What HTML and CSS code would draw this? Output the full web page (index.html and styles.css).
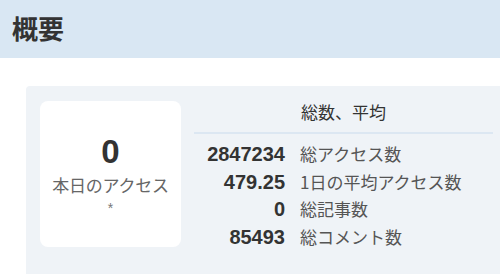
FILE: index.html
```html
<!DOCTYPE html>
<html lang="ja">
<head>
  <meta charset="UTF-8" />
  <meta name="viewport" content="width=device-width, initial-scale=1.0"/>
  <title>概要</title>
  <link rel="stylesheet" href="styles.css">
</head>
<body>
  <header class="page-head">
    <h1>概要</h1>
  </header>

  <div class="summary">
    <div class="today">
      <div class="today-num">0</div>
      <div class="today-label">本日のアクセス</div>
      <div class="today-note">*</div>
    </div>

    <div class="totals">
      <h2>総数、平均</h2>
      <div class="rows">
        <span class="num">2847234</span><span class="label">総アクセス数</span>
        <span class="num">479.25</span><span class="label">1日の平均アクセス数</span>
        <span class="num">0</span><span class="label">総記事数</span>
        <span class="num">85493</span><span class="label">総コメント数</span>
      </div>
    </div>
  </div>
</body>
</html>
```

FILE: styles.css
```css
body {
  margin: 0;
  background: #fff;
  color: #333;
  font-family: "Liberation Sans", "Noto Sans CJK JP", sans-serif;
}
.page-head {
  background: #d9e7f3;
  height: 58px;
  padding-left: 12px;
}
.page-head h1 {
  margin: 0;
  font-family: "Noto Sans CJK JP", sans-serif;
  font-size: 26px;
  font-weight: bold;
  line-height: 56px;
  color: #333;
}
.summary {
  display: flex;
  align-items: flex-start;
  gap: 13px;
  margin: 28px 0 0 26px;
  padding: 15px 7px 27px 14px;
  background: #eff3f7;
  border-radius: 4px 0 0 0;
}
.today {
  width: 141px;
  height: 146px;
  flex: none;
  box-sizing: border-box;
  padding-top: 34px;
  background: #fff;
  border-radius: 8px;
  text-align: center;
}
.today-num {
  font-size: 33px;
  font-weight: bold;
  line-height: 33px;
  color: #333;
}
.today-label {
  margin-top: 7px;
  font-family: "Noto Sans CJK JP", sans-serif;
  font-size: 17px;
  line-height: 20px;
  color: #666;
  letter-spacing: -0.2px;
}
.today-note {
  margin-top: 5px;
  font-size: 14px;
  line-height: 16px;
  color: #777;
}
.totals {
  flex: 1;
}
.totals h2 {
  margin: 0;
  padding-bottom: 9px;
  border-bottom: 2px solid #dce7f2;
  font-family: "Noto Sans CJK JP", sans-serif;
  font-size: 17px;
  font-weight: normal;
  line-height: 22px;
  text-align: center;
  color: #333;
}
.rows {
  display: grid;
  grid-template-columns: 91px 1fr;
  grid-auto-rows: 27.7px;
  column-gap: 15px;
  align-items: baseline;
  padding-top: 6px;
}
.num {
  font-size: 20px;
  font-weight: bold;
  text-align: right;
  color: #333;
  line-height: 27.7px;
}
.label {
  font-family: "Noto Sans CJK JP", sans-serif;
  font-size: 17px;
  color: #555;
  line-height: 27.7px;
}
```
